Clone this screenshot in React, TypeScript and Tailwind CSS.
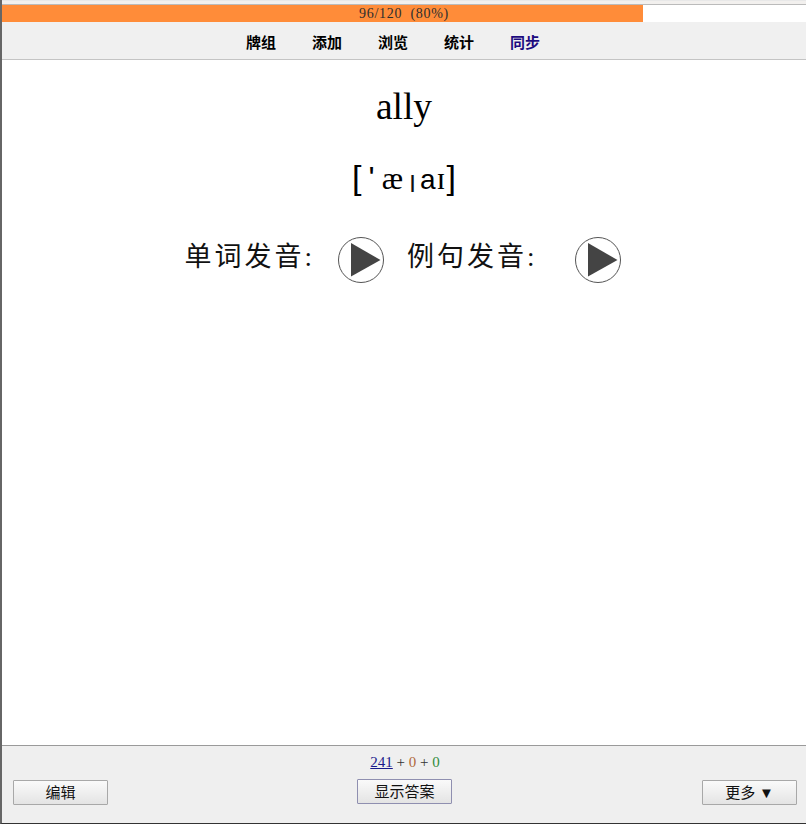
import React from 'react';

const cjk = "font-['Liberation_Serif','Noto_Sans_CJK_SC',serif]";

const NAV = ['牌组', '添加', '浏览', '统计'];

const PlayButton = () => (
  <svg width="48" height="48" viewBox="0 0 48 48" className="shrink-0">
    <circle cx="24" cy="24" r="22.5" fill="#fff" stroke="#555" strokeWidth="1" />
    <path d="M14 7 L43.5 24 L14 40.5 Z" fill="#444" />
  </svg>
);

const Btn = ({ children, cls }: { children: React.ReactNode; cls?: string }) => (
  <button className={`w-[95px] h-[25px] border rounded-[1px] bg-gradient-to-b from-[#fafafa] to-[#e4e4e4] text-[15px] leading-[22px] text-[#111] ${cls ?? ''}`}>
    {children}
  </button>
);

export default function App() {
  return (
    <div className={`w-[806px] h-[824px] flex flex-col bg-white border-l-2 border-l-[#666] border-b border-b-[#333] ${cjk}`}>
      <div className="h-[5px] bg-[#f2f0ee] border-t border-t-[#e8e8e8] border-b border-b-[#bbb]" />
      <div className="relative h-[17px] bg-white">
        <div className="w-[641px] h-full bg-[#ff8c39]" />
        <div className="absolute inset-0 flex justify-center text-[14px] leading-[17px] tracking-[0.7px] text-[#2e2e2e]">
          96/120&nbsp;&nbsp;(80%)
        </div>
      </div>
      <div className="h-[38px] bg-[#f0f0f0] border-b border-b-[#c4c4c4] flex justify-center items-center gap-[36px] pt-[5px] pr-[22px] text-[15px] font-bold text-black">
        {NAV.map(n => (
          <span key={n}>{n}</span>
        ))}
        <span className="text-[#1c0b80]">同步</span>
      </div>

      <main className="flex-1 flex flex-col items-center text-black">
        <div className="mt-[20px] text-[37.5px] leading-[54px]">ally</div>
        <div className="mt-[22px] text-[32px] leading-[44px] whitespace-nowrap">
          <span className="font-['Liberation_Sans'] font-light text-[34px] leading-[34px]">[</span>
          <span className="ml-[7px] font-['Liberation_Sans']">&#39;</span>
          <span className="ml-[7px]">æ</span>
          <span className="ml-[7px] text-[18px] font-bold align-[1px] font-['Liberation_Sans'] text-[#111]">|</span>
          <span className="ml-[5px] font-['Liberation_Sans'] text-[28px]">a</span>
          <span className="ml-[1px]">ɪ</span>
          <span className="ml-[1px] font-['Liberation_Sans'] font-light text-[34px] leading-[34px]">]</span>
        </div>
        <div className="mt-[29px] mr-[2px] flex items-center text-[27px] tracking-[3px] leading-[48px] text-[#111]">
          <span className="pb-[6px]">单词发音:</span>
          <span className="ml-[22px]"><PlayButton /></span>
          <span className="ml-[22px] pb-[6px]">例句发音:</span>
          <span className="ml-[36px]"><PlayButton /></span>
        </div>
      </main>

      <footer className="h-[78px] bg-[#efefef] border-t border-t-[#9a9a9a] flex flex-col">
        <div className="mt-[6px] ml-[2px] h-[20px] text-center text-[15px] leading-[20px] text-[#333]">
          <a className="underline text-[#1a1a8c]">241</a> + <span className="text-[#b0683a]">0</span> + <span className="text-[#2e8b3a]">0</span>
        </div>
        <div className="mt-[7px] flex justify-between items-start pl-[11px] pr-[9px]">
          <Btn cls="mt-[1px] border-[#a8a8a8]">编辑</Btn>
          <Btn cls="mr-[1px] border-[#8f8fb0]">显示答案</Btn>
          <Btn cls="mt-[1px] border-[#a8a8a8]">更多 ▼</Btn>
        </div>
      </footer>
    </div>
  );
}
